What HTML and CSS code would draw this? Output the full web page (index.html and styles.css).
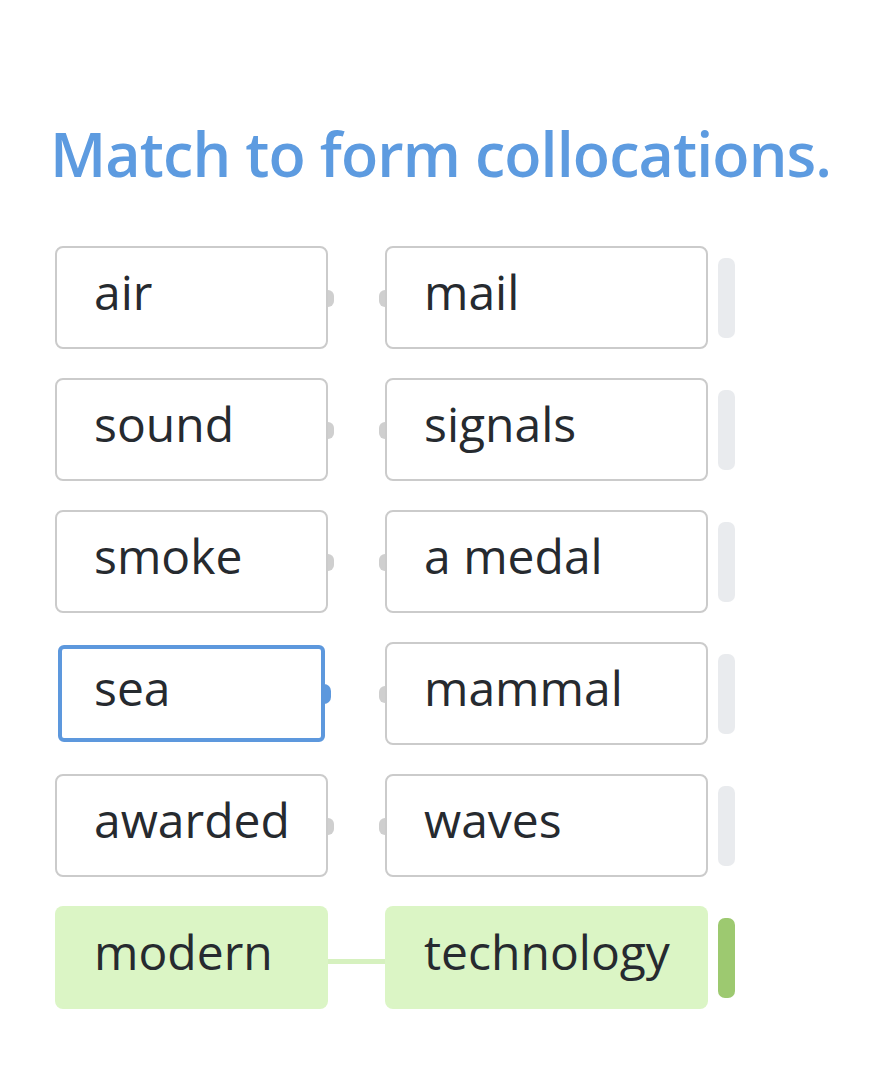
FILE: index.html
```html
<!DOCTYPE html>
<html lang="en">
<head>
<meta charset="utf-8">
<title>Match to form collocations</title>
<link rel="stylesheet" href="styles.css">
</head>
<body>
<main class="exercise">
  <h1 class="title">Match to form collocations.</h1>
  <div class="pairs">
    <div class="row">
      <div class="card left"><span>air</span></div>
      <div class="card right"><span>mail</span></div>
      <div class="bar"></div>
    </div>
    <div class="row">
      <div class="card left"><span>sound</span></div>
      <div class="card right"><span>signals</span></div>
      <div class="bar"></div>
    </div>
    <div class="row">
      <div class="card left"><span>smoke</span></div>
      <div class="card right"><span>a medal</span></div>
      <div class="bar"></div>
    </div>
    <div class="row">
      <div class="card left selected"><span>sea</span></div>
      <div class="card right"><span>mammal</span></div>
      <div class="bar"></div>
    </div>
    <div class="row">
      <div class="card left"><span>awarded</span></div>
      <div class="card right"><span>waves</span></div>
      <div class="bar"></div>
    </div>
    <div class="row matched">
      <div class="card left"><span>modern</span></div>
      <div class="card right"><span>technology</span></div>
      <div class="bar"></div>
    </div>
  </div>
</main>
</body>
</html>
```

FILE: styles.css
```css
html, body {
  margin: 0;
  padding: 0;
  background: #ffffff;
}

body {
  font-family: "Open Sans", "Noto Sans", sans-serif;
  color: #262a2f;
}

.exercise {
  padding: 111px 0 0 50px;
}

.title {
  margin: 0;
  font-size: 61px;
  font-weight: 600;
  line-height: 86px;
  letter-spacing: -0.9px;
  color: #5d9be0;
  white-space: nowrap;
}

.pairs {
  margin-top: 49px;
  padding-left: 5px;
  display: flex;
  flex-direction: column;
  gap: 29px;
}

.row {
  display: grid;
  grid-template-columns: 273px 323px 17px;
  column-gap: 57px;
  height: 103px;
  position: relative;
}

.row .bar {
  margin-left: -47px;
  align-self: center;
  width: 17px;
  height: 80px;
  border-radius: 7px;
  background: #e9ebee;
}

.card {
  box-sizing: border-box;
  position: relative;
  border: 2px solid #cbcbcb;
  border-radius: 8px;
  background: #fff;
  display: flex;
  align-items: center;
  padding: 0 0 11px 37px;
  font-size: 48px;
  line-height: 64px;
}

.card.left::after,
.card.right::before {
  content: "";
  position: absolute;
  top: 50%;
  width: 6px;
  height: 17px;
  margin-top: -8px;
  background: #cfcfcf;
}

.card.left::after {
  right: -8px;
  border-radius: 0 9px 9px 0;
}

.card.right::before {
  left: -8px;
  border-radius: 9px 0 0 9px;
}

.card.right {
  padding-left: 37px;
}

.card.selected {
  margin: 3px;
  border: 4px solid #5d98dd;
  border-radius: 6px;
  padding-left: 32px;
}

.card.selected::after {
  right: -10px;
  width: 7px;
  height: 20px;
  margin-top: -10px;
  background: #5d98dd;
  border-radius: 0 10px 10px 0;
}

.row.matched .card {
  border: none;
  background: #dbf5c5;
  padding-left: 39px;
}

.row.matched .card.left::after {
  right: -57px;
  width: 57px;
  height: 5px;
  margin-top: 1px;
  border-radius: 0;
  background: #d6f1bf;
}

.row.matched .card.right::before {
  display: none;
}

.row.matched .bar {
  background: #9dc970;
}
```
